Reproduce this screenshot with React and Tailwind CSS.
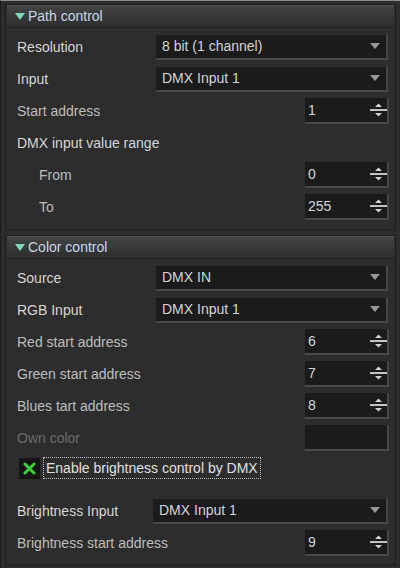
import React from "react";

const font = { fontFamily: '"Liberation Sans", Arial, sans-serif' };

const Arrow = () => (
  <svg width="10" height="6" viewBox="0 0 10 6" className="shrink-0">
    <path d="M0 0 L10 0 L5 6 Z" fill="#9a9a9a" />
  </svg>
);

const SpinArrows = () => (
  <svg width="17" height="18" viewBox="0 0 17 18" className="shrink-0">
    <path d="M5 6 L12 6 L8.5 2.5 Z" fill="#d2d2d2" />
    <rect x="0" y="8" width="17" height="2" fill="#c4c4c4" />
    <path d="M5 12 L12 12 L8.5 15.5 Z" fill="#d2d2d2" />
  </svg>
);

const Header = ({ title }) => (
  <div className="mx-[1px] h-[23px] flex items-center gap-[3px] pl-[8px] bg-gradient-to-b from-[#444444] to-[#2e2e2e] border-b border-[#222222] shadow-[inset_0_1px_0_#505050]">
    <svg width="10" height="7" viewBox="0 0 10 7">
      <path d="M0 0 L10 0 L5 7 Z" fill="#7fd8b6" />
    </svg>
    <span className="text-[14px] text-[#c9d7ea]">{title}</span>
  </div>
);

const Select = ({ text, w = "w-[232px]" }) => (
  <div className={`${w} h-[25px] bg-[#1b1b1b] border-b-2 border-r-2 border-[#474747] flex items-center justify-between px-[6px]`}>
    <span className="text-[14px] text-[#d4d4d4]">{text}</span>
    <Arrow />
  </div>
);

const Spin = ({ value, disabled }) => (
  <div className="w-[84px] h-[26px] mr-[-1px] bg-[#1b1b1b] border-b-2 border-r-2 border-[#474747] flex items-center justify-between pl-[3px]">
    <span className="text-[14px] text-[#d4d4d4]">{value}</span>
    {!disabled && <SpinArrows />}
  </div>
);

const Row = ({ label, tone = "text-[#d6d6d6]", indent = "pl-[11px]", children }) => (
  <div className={`h-[32px] flex items-center justify-between pr-[7px] ${indent}`}>
    <span className={`text-[14px] ${tone}`}>{label}</span>
    {children}
  </div>
);

const Group = ({ title, h, children }) => (
  <div className={`mx-[4px] ${h} border border-[#1f1f1f] border-b-2 border-b-[#242424] flex flex-col`}>
    <Header title={title} />
    <div className="pt-[3px] flex flex-col">{children}</div>
  </div>
);

export default function App() {
  return (
    <div className="w-[400px] h-[568px] bg-[#2d2d2d] border-t border-[#8c8c8c] border-l border-l-[#1c1c1c] overflow-hidden pt-[3px] flex flex-col gap-[4px]" style={font}>
      <Group title="Path control" h="h-[227px]">
        <Row label="Resolution">
          <Select text="8 bit (1 channel)" />
        </Row>
        <Row label="Input">
          <Select text="DMX Input 1" />
        </Row>
        <Row label="Start address" tone="text-[#bdbdbd]">
          <Spin value="1" />
        </Row>
        <Row label="DMX input value range" />
        <Row label="From" tone="text-[#bdbdbd]" indent="pl-[33px]">
          <Spin value="0" />
        </Row>
        <Row label="To" tone="text-[#bdbdbd]" indent="pl-[33px]">
          <Spin value="255" />
        </Row>
      </Group>

      <Group title="Color control" h="h-[331px]">
        <Row label="Source">
          <Select text="DMX IN" />
        </Row>
        <Row label="RGB Input">
          <Select text="DMX Input 1" />
        </Row>
        <Row label="Red start address" tone="text-[#bdbdbd]">
          <Spin value="6" />
        </Row>
        <Row label="Green start address" tone="text-[#bdbdbd]">
          <Spin value="7" />
        </Row>
        <Row label="Blues tart address" tone="text-[#bdbdbd]">
          <Spin value="8" />
        </Row>
        <Row label="Own color" tone="text-[#6c6c6c]">
          <Spin value="" disabled />
        </Row>
        <div className="h-[28px] mb-[13px] flex items-center pl-[13px] gap-[3px]">
          <div className="w-[21px] h-[21px] bg-[#161616] flex items-center justify-center">
            <svg width="13" height="13" viewBox="0 0 13 13">
              <path d="M2 2 L11 11 M11 2 L2 11" stroke="#3fd136" strokeWidth="3" strokeLinecap="round" />
            </svg>
          </div>
          <span className="text-[14px] text-[#e0e0e0] border border-dotted border-[#bdbdbd] px-[2px] leading-[20px]">
            Enable brightness control by DMX
          </span>
        </div>
        <Row label="Brightness Input">
          <Select text="DMX Input 1" w="w-[235px]" />
        </Row>
        <Row label="Brightness start address" tone="text-[#bdbdbd]">
          <Spin value="9" />
        </Row>
      </Group>
    </div>
  );
}
